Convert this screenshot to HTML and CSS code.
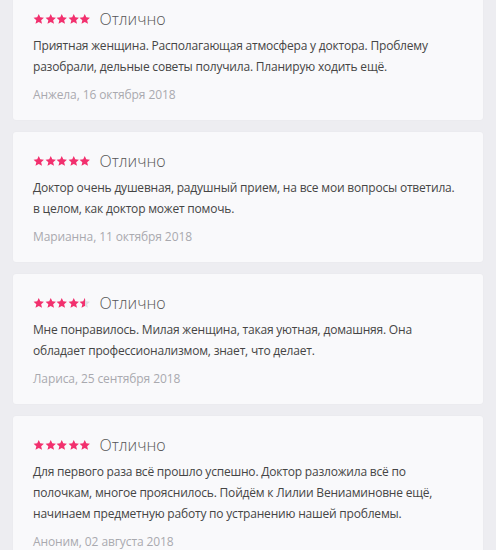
FILE: index.html
```html
<!DOCTYPE html>
<html lang="ru">
<head>
    <meta charset="UTF-8">
    <meta name="viewport" content="width=device-width, initial-scale=1.0">
    <title>Отзывы</title>
    <link rel="stylesheet" href="styles.css">
</head>
<body>
    <svg width="0" height="0" class="defs">
        <defs>
            <symbol id="star" viewBox="0 0 24 24">
                <path d="M12 1.5l3.2 7.1 7.6.7-5.8 5.1 1.8 7.6L12 18l-6.8 4 1.8-7.6-5.8-5.1 7.6-.7z"/>
            </symbol>
            <linearGradient id="half">
                <stop offset="50%" stop-color="#f2306e"/>
                <stop offset="50%" stop-color="#dcdce2"/>
            </linearGradient>
        </defs>
    </svg>

    <div class="reviews">
        <div class="review">
            <div class="review-head">
                <div class="stars" data-rating="5"></div>
                <span class="verdict">Отлично</span>
            </div>
            <p class="review-text">Приятная женщина. Располагающая атмосфера у доктора. Проблему разобрали, дельные советы получила. Планирую ходить ещё.</p>
            <div class="review-meta">Анжела, 16 октября 2018</div>
        </div>

        <div class="review">
            <div class="review-head">
                <div class="stars" data-rating="5"></div>
                <span class="verdict">Отлично</span>
            </div>
            <p class="review-text">Доктор очень душевная, радушный прием, на все мои вопросы ответила. в целом, как доктор может помочь.</p>
            <div class="review-meta">Марианна, 11 октября 2018</div>
        </div>

        <div class="review">
            <div class="review-head">
                <div class="stars" data-rating="4.5"></div>
                <span class="verdict">Отлично</span>
            </div>
            <p class="review-text">Мне понравилось. Милая женщина, такая уютная, домашняя. Она обладает профессионализмом, знает, что делает.</p>
            <div class="review-meta">Лариса, 25 сентября 2018</div>
        </div>

        <div class="review">
            <div class="review-head">
                <div class="stars" data-rating="5"></div>
                <span class="verdict">Отлично</span>
            </div>
            <p class="review-text">Для первого раза всё прошло успешно. Доктор разложила всё по полочкам, многое прояснилось. Пойдём к Лилии Вениаминовне ещё, начинаем предметную работу по устранению нашей проблемы.</p>
            <div class="review-meta">Аноним, 02 августа 2018</div>
        </div>
    </div>

    <script>
        // draw rating stars from data-rating
        document.querySelectorAll('.stars').forEach(el => {
            const rating = parseFloat(el.dataset.rating);
            let html = '';
            for (let i = 1; i <= 5; i++) {
                let fill = 'star-empty';
                if (rating >= i) fill = 'star-full';
                else if (rating >= i - 0.5) fill = 'star-half';
                html += `<svg class="star ${fill}"><use href="#star"/></svg>`;
            }
            el.innerHTML = html;
        });
    </script>
</body>
</html>
```

FILE: styles.css
```css
body {
    margin: 0;
    background: #ededf1;
    font-family: "Open Sans", "Noto Sans", sans-serif;
    color: #444;
}

.defs {
    position: absolute;
}

.reviews {
    display: flex;
    flex-direction: column;
    gap: 12px;
    padding: 0 13px;
    margin-top: -10px;
}

.review {
    background: #f9f9fb;
    border-radius: 3px;
    padding: 18px 20px 15px;
    box-shadow: 0 0 2px rgba(0,0,0,0.04);
}

.review-head {
    display: flex;
    align-items: center;
    gap: 9px;
    height: 22px;
}

.stars {
    display: flex;
}

.star {
    width: 11.5px;
    height: 12px;
}

.star-full {
    fill: #f2306e;
}

.star-half {
    fill: url(#half);
}

.star-empty {
    fill: #dcdce2;
}

.verdict {
    font-size: 16px;
    font-weight: 300;
    color: #555;
}

.review-text {
    margin: 5px 0 7px;
    font-size: 12px;
    line-height: 21px;
    letter-spacing: -0.2px;
    color: #454545;
}

.review-meta {
    font-size: 12px;
    line-height: 21px;
    letter-spacing: -0.1px;
    color: #a9a9af;
}
```
